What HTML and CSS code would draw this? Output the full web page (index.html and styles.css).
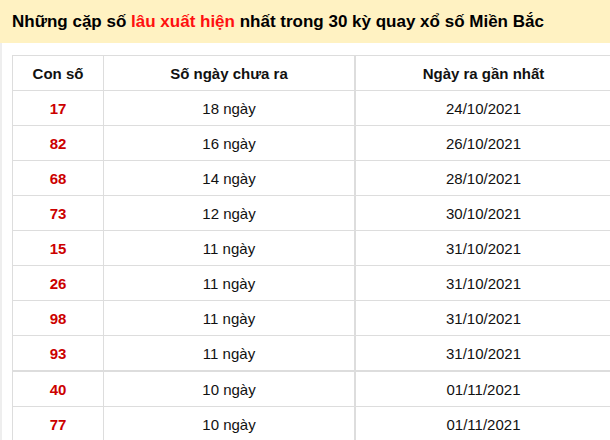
FILE: index.html
```html
<!DOCTYPE html>
<html>
<head>
    <title>Cặp số lâu xuất hiện - Miền Bắc</title>
    <link rel="stylesheet" href="styles.css">
</head>
<body>
    <div class="title-bar">
        <h2>Những cặp số <span class="hot">lâu xuất hiện</span> nhất trong 30 kỳ quay xổ số Miền Bắc</h2>
    </div>

    <div class="content">
        <table class="stats">
            <thead>
                <tr>
                    <th class="col-num">Con số</th>
                    <th class="col-days">Số ngày chưa ra</th>
                    <th class="col-date">Ngày ra gần nhất</th>
                </tr>
            </thead>
            <tbody>
                <tr><td class="num">17</td><td>18 ngày</td><td class="col-date">24/10/2021</td></tr>
                <tr><td class="num">82</td><td>16 ngày</td><td class="col-date">26/10/2021</td></tr>
                <tr><td class="num">68</td><td>14 ngày</td><td class="col-date">28/10/2021</td></tr>
                <tr><td class="num">73</td><td>12 ngày</td><td class="col-date">30/10/2021</td></tr>
                <tr><td class="num">15</td><td>11 ngày</td><td class="col-date">31/10/2021</td></tr>
                <tr><td class="num">26</td><td>11 ngày</td><td class="col-date">31/10/2021</td></tr>
                <tr><td class="num">98</td><td>11 ngày</td><td class="col-date">31/10/2021</td></tr>
                <tr><td class="num">93</td><td>11 ngày</td><td class="col-date">31/10/2021</td></tr>
                <tr class="split"><td class="num">40</td><td>10 ngày</td><td class="col-date">01/11/2021</td></tr>
                <tr><td class="num">77</td><td>10 ngày</td><td class="col-date">01/11/2021</td></tr>
            </tbody>
        </table>
    </div>
</body>
</html>
```

FILE: styles.css
```css
body { margin: 0; font-family: Arial, "Liberation Sans", sans-serif; color: #111; background: #fff; overflow: hidden; }
.title-bar { background: #fff2c2; height: 43px; padding: 0 12px; display: flex; align-items: center; }
.title-bar h2 { margin: 0; font-size: 17px; font-weight: bold; color: #000; white-space: nowrap; }
.hot { color: #ff1010; }
.content { border-left: 2px solid #eeeeee; padding: 12px 0 0 10px; }
.stats { border-collapse: collapse; width: 600px; table-layout: fixed; font-size: 15px; }
.stats th, .stats td { border: 1px solid #dddddd; height: 34px; padding: 0; text-align: center; }
.stats th { font-weight: bold; color: #111; }
.col-num { width: 90px; }
.col-days { width: 250px; }
.stats .col-date { border-left: 2px solid #dddddd; }
.stats .split td { border-top: 2px solid #dddddd; }
.num { color: #cc0000; font-weight: bold; }
```
